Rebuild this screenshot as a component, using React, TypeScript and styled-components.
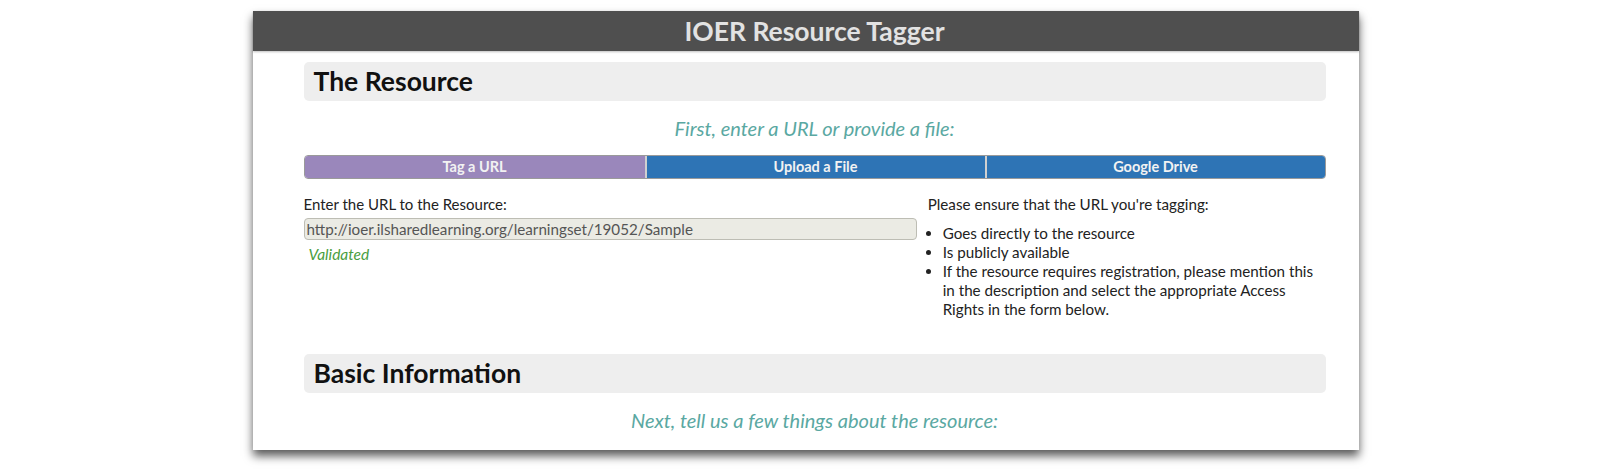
import React from 'react'
import { styled, createGlobalStyle } from 'styled-components';

const GlobalStyle = createGlobalStyle`
    html, body {
        margin: 0;
        padding: 0;
        background: #ffffff;
        font-family: Lato, "Open Sans", sans-serif;
    }

    body {
        min-height: 100vh;
    }
`

type Tab = {
    label: string;
    active?: boolean;
}

const tabs: Tab[] = [
    { label: 'Tag a URL', active: true },
    { label: 'Upload a File' },
    { label: 'Google Drive' },
]

const checks = [
    'Goes directly to the resource',
    'Is publicly available',
    'If the resource requires registration, please mention this in the description and select the appropriate Access Rights in the form below.',
]

const App = () => {
    return (
        <>
            <GlobalStyle />
            <Page>
                <Card>
                    <Header>IOER Resource Tagger</Header>
                    <Content>
                        <SectionHeading>The Resource</SectionHeading>
                        <Prompt>First, enter a URL or provide a file:</Prompt>
                        <TabBar>
                            {tabs.map(tab => (
                                <TabButton key={tab.label} $active={tab.active}>{tab.label}</TabButton>
                            ))}
                        </TabBar>
                        <Columns>
                            <LeftColumn>
                                <FieldLabel>Enter the URL to the Resource:</FieldLabel>
                                <UrlInput value="http://ioer.ilsharedlearning.org/learningset/19052/Sample" disabled readOnly />
                                <Validated>Validated</Validated>
                            </LeftColumn>
                            <RightColumn>
                                <Notice>Please ensure that the URL you're tagging:</Notice>
                                <CheckList>
                                    {checks.map(item => <li key={item}>{item}</li>)}
                                </CheckList>
                            </RightColumn>
                        </Columns>
                        <SectionHeading $spaced>Basic Information</SectionHeading>
                        <Prompt>Next, tell us a few things about the resource:</Prompt>
                    </Content>
                </Card>
            </Page>
        </>
    )
};

const Page = styled.div`
    padding: 11px 0 22px;
`

const Card = styled.main`
    width: 1106px;
    margin: 0 auto;
    background: #ffffff;
    box-shadow: 0 6px 9px rgba(0, 0, 0, 0.65);
`

const Header = styled.header`
    height: 40px;
    line-height: 40px;
    padding-left: 18px;
    background: #4f4f4f;
    color: #e2e2e2;
    text-align: center;
    font-size: 26.5px;
    font-weight: 700;
    box-shadow: 0 1px 2px rgba(0, 0, 0, 0.25);
`

const Content = styled.div`
    padding: 11px 33px 19px 51px;
`

const SectionHeading = styled.h2<{ $spaced?: boolean }>`
    margin: ${p => p.$spaced ? '35px' : '0'} 0 0;
    height: 39px;
    line-height: 39px;
    padding-left: 10px;
    background: #eeeeee;
    border-radius: 5px;
    color: #111111;
    font-size: 26.5px;
    font-weight: 700;
`

const Prompt = styled.p`
    margin: 16px 0 0;
    line-height: 22px;
    text-align: center;
    color: #5aa8a2;
    font-size: 20px;
    font-style: italic;
`

const TabBar = styled.nav`
    margin-top: 16px;
    display: grid;
    grid-template-columns: repeat(3, 1fr);
    height: 24px;
    border: 1px solid #9a9a9a;
    border-radius: 4px;
    overflow: hidden;
    box-sizing: border-box;
`

const TabButton = styled.button<{ $active?: boolean }>`
    border: none;
    border-left: 2px solid #d0d0d0;
    margin: 0;
    padding: 0;
    background: ${p => p.$active ? '#9a87bb' : '#2e74b5'};
    color: #f2f2f2;
    font-family: Lato, "Open Sans", sans-serif;
    font-size: 14.5px;
    font-weight: 700;
    line-height: 22px;

    &:first-child {
        border-left: none;
    }
`

const Columns = styled.div`
    margin-top: 16px;
    display: flex;
`

const LeftColumn = styled.div`
    width: 60%;
    display: flex;
    flex-direction: column;
`

const RightColumn = styled.div`
    width: 40%;
    padding: 0 7px 0 11px;
    box-sizing: border-box;
`

const FieldLabel = styled.div`
    line-height: 18px;
    font-size: 15px;
    color: #222222;
`

const Notice = styled(FieldLabel)`
    font-size: 15.2px;
`

const UrlInput = styled.input`
    margin-top: 5px;
    height: 22px;
    box-sizing: border-box;
    padding: 0 2px;
    border: 1px solid #bdbdb4;
    border-radius: 4px;
    background: #ebebe4;
    color: #555555;
    font-family: Lato, "Open Sans", sans-serif;
    font-size: 15.2px;
`

const Validated = styled.span`
    margin-top: 5px;
    padding-left: 5px;
    line-height: 18px;
    color: #4a9e3f;
    font-size: 15.5px;
    font-style: italic;
`

const CheckList = styled.ul`
    margin: 11px 0 0;
    padding-left: 15px;
    font-size: 15.2px;
    line-height: 19px;
    color: #222222;
`

export default App;
